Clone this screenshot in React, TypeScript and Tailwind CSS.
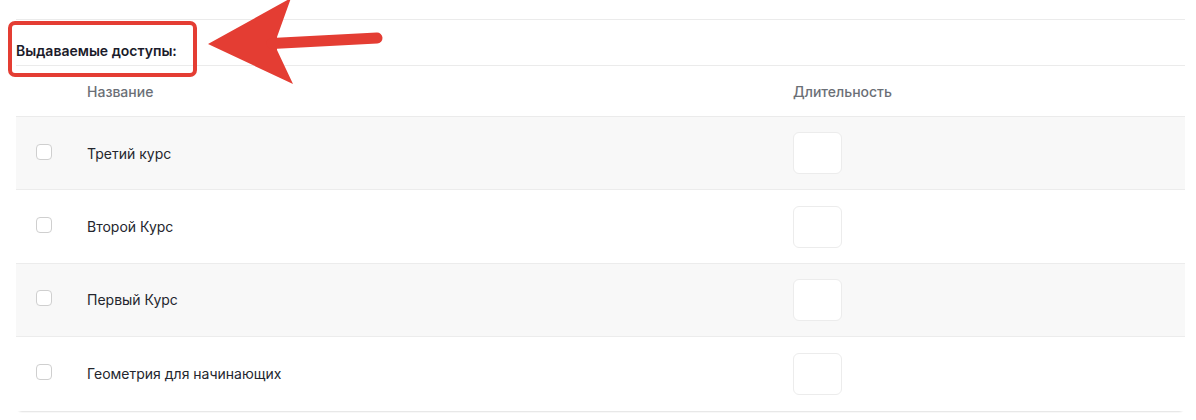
import React from "react";

const COURSES = ["Третий курс", "Второй Курс", "Первый Курс", "Геометрия для начинающих"];

export default function App() {
  return (
    <div
      className="relative w-[1196px] h-[420px] bg-white overflow-hidden pl-4 pr-[11px] pt-[19px]"
      style={{ fontFamily: "Inter, 'Noto Sans', sans-serif" }}
    >
      <div className="border-t border-[#ebebeb]">
        <div className="h-[45px] flex items-end pb-[4px] text-[14px] font-semibold text-[#1b1b2a]">
          Выдаваемые доступы:
        </div>
        <div className="rounded-b-md border-b border-[#e8e8e8] shadow-[0_1px_1px_rgba(0,0,0,0.03)]">
          <div className="h-[52px] flex items-center border-t border-b border-[#ebebeb] text-[14px] font-medium text-[#6b6f76]">
            <div className="w-[71px] shrink-0" />
            <div className="w-[706px] shrink-0">Название</div>
            <div>Длительность</div>
          </div>
          {COURSES.map((c, i) => (
            <div
              key={c}
              className={
                "h-[73.4px] flex items-center text-[14px] text-[#24262e] " +
                (i % 2 === 0 ? "bg-[#f8f8f8] " : "bg-white ") +
                (i < COURSES.length - 1 ? "border-b border-[#ececec]" : "")
              }
            >
              <div className="w-[71px] shrink-0 pl-5 pb-[3px]">
                <div className="w-4 h-4 rounded-[4px] border border-[#cfcfcf] bg-white" />
              </div>
              <div className="w-[706px] shrink-0">{c}</div>
              <div className="w-[49px] h-[42px] rounded-md border border-[#ececec] bg-white" />
            </div>
          ))}
        </div>
      </div>

      {/* annotation */}
      <div className="absolute left-[8px] top-[21px] w-[189px] h-[56px] rounded-[7px] border-[4px] border-[#e43d33]" />
      <svg className="absolute left-0 top-0" width="400" height="100" viewBox="0 0 400 100">
        <polygon points="208,44 291,-2 277,37 277,50 293,84" fill="#e43d33" />
        <line x1="272" y1="43.5" x2="377" y2="38" stroke="#e43d33" strokeWidth="11" strokeLinecap="round" />
      </svg>
    </div>
  );
}
